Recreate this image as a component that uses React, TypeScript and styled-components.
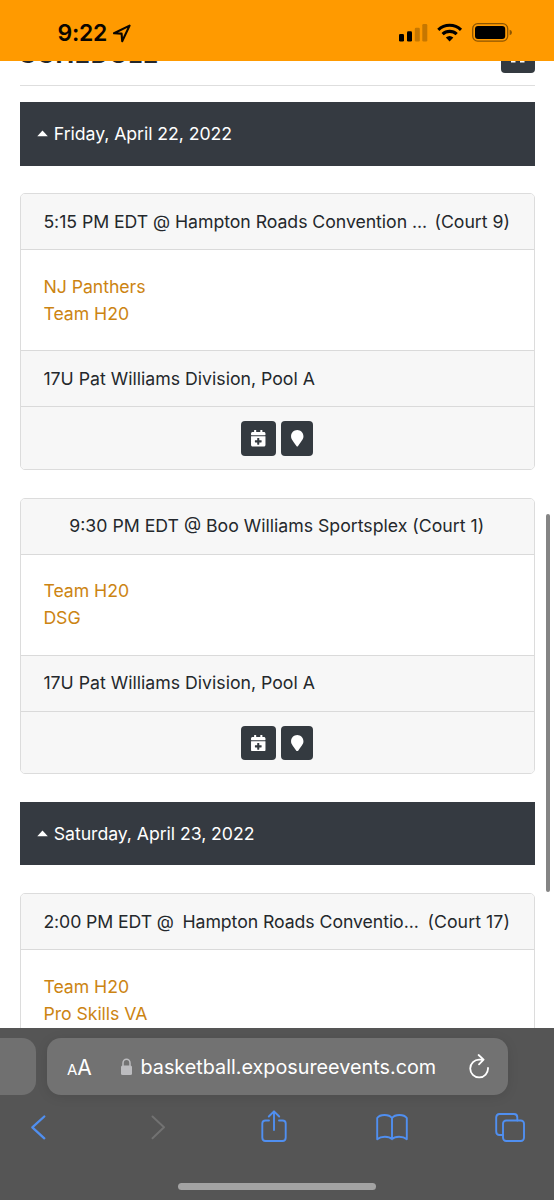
import React from 'react';
import styled, { createGlobalStyle } from 'styled-components';
import { FaCalendarPlus, FaMapMarker } from 'react-icons/fa';

const GlobalStyle = createGlobalStyle`
  *, *::before, *::after { box-sizing: border-box; }
  body { margin: 0; background: #fff; }
`;

const Screen = styled.div`
  position: relative;
  display: flex;
  flex-direction: column;
  width: 554px;
  height: 1200px;
  overflow: hidden;
  font-family: Inter, 'Liberation Sans', sans-serif;
  font-size: 17.7px;
  line-height: 27.3px;
  color: #24282c;
  background: #fff;
`;

const StatusBar = styled.header`
  display: flex;
  flex: none;
  justify-content: space-between;
  height: 61px;
  padding: 20px 41px 0 57.5px;
  background: #ff9a00;
  color: #0a0600;
`;

const Clock = styled.div`
  display: flex;
  gap: 5px;
  font-size: 23px;
  font-weight: 600;
  letter-spacing: -0.3px;
`;

const StatusIcons = styled.svg`
  flex: none;
  display: block;
`;

const Page = styled.main`
  flex: none;
  display: flex;
  flex-direction: column;
  height: 967px;
  padding: 0 19.5px;
  overflow: hidden;
`;

const TitleRow = styled.div`
  display: flex;
  flex: none;
  justify-content: space-between;
  align-items: flex-end;
  height: 42px;
  margin-top: -17px;
  padding-bottom: 12px;
  border-bottom: 1px solid #dedede;
`;

const Title = styled.h1`
  margin: 0 0 5.5px;
  font-size: 25px;
  line-height: 28px;
  font-weight: 700;
  letter-spacing: 0.6px;
`;

const IconButton = styled.button<{ $width: number }>`
  display: flex;
  align-items: center;
  justify-content: center;
  width: ${p => p.$width}px;
  height: 34.5px;
  padding: 0;
  border: 0;
  border-radius: 4px;
  background: #343a40;
  color: #fff;
  font-size: 16.5px;
`;

const DayBar = styled.div`
  display: flex;
  flex: none;
  align-items: center;
  gap: 5px;
  height: 63.5px;
  margin: 0 0 27.7px;
  padding: 0 17.8px;
  background: #353a41;
  color: #fff;
`;

const Spacer = styled.div`
  flex: none;
  height: 16px;
`;

const Card = styled.section`
  flex: none;
  height: 276.9px;
  margin-bottom: 27.5px;
  border: 1px solid #dcdcdc;
  border-radius: 5px;
  background: #fff;
  overflow: hidden;
`;

const CardHeader = styled.div<{ $centered?: boolean }>`
  display: flex;
  justify-content: ${p => (p.$centered ? 'center' : 'space-between')};
  height: 56px;
  padding: 13.7px 23.5px 0 22.9px;
  border-bottom: 1px solid #dadada;
  background: #f7f7f7;
  white-space: pre;
`;

const Teams = styled.div`
  display: flex;
  flex-direction: column;
  height: 100px;
  padding: 22.4px 22.9px 0;
`;

const TeamLink = styled.a`
  color: #cc8412;
  text-decoration: none;
  letter-spacing: -0.05px;
`;

const Division = styled.div`
  height: 56px;
  padding: 13.7px 22.9px 0;
  border-top: 1px solid #dadada;
  background: #f7f7f7;
`;

const Actions = styled.div`
  display: flex;
  justify-content: center;
  gap: 5px;
  height: 65px;
  padding-top: 14px;
  border-top: 1px solid #dadada;
  background: #f7f7f7;
`;

const ScrollThumb = styled.div`
  position: absolute;
  top: 514px;
  right: 4px;
  width: 4px;
  height: 378px;
  border-radius: 2px;
  background: #858585;
`;

const Text = styled.span<{ $tracking?: number }>`
  letter-spacing: ${p => p.$tracking ?? 0}px;
  white-space: pre;
`;

const BrowserBar = styled.footer`
  display: flex;
  flex: none;
  flex-direction: column;
  height: 172px;
  background: #555;
`;

const TabStrip = styled.div`
  display: flex;
  gap: 11px;
  padding-top: 10.2px;
`;

const PreviousTab = styled.div`
  width: 36px;
  height: 56.5px;
  border-radius: 0 14px 14px 0;
  background: #707070;
`;

const AddressField = styled.div`
  display: flex;
  align-items: center;
  width: 460.5px;
  height: 56.5px;
  padding: 2px 18px 0 20px;
  border-radius: 14px;
  background: #727272;
  box-shadow: 0 2px 12px rgba(0, 0, 0, 0.1);
  color: #fff;
`;

const TextSize = styled.span`
  display: flex;
  align-items: baseline;
  width: 53px;
  font-size: 21px;
`;

const SmallLetter = styled.span`
  font-size: 15px;
  line-height: 16px;
`;

const Url = styled.span`
  flex: 1;
  margin-left: 7.5px;
  font-size: 19.8px;
  white-space: nowrap;
`;

const Toolbar = styled.nav`
  display: grid;
  grid-template-columns: repeat(5, 118px);
  justify-items: center;
  height: 34px;
  margin: 14.3px 0 0 -21px;
`;

const HomeIndicator = styled.div`
  align-self: center;
  width: 198px;
  height: 7px;
  margin-top: 40px;
  border-radius: 4px;
  background: #a3a3a3;
`;

const ToolIcon = ({ w, color = '#508ff0', children }: { w: number; color?: string; children: React.ReactNode }) => (
  <svg width={w} height="34" viewBox={`0 0 ${w} 34`} fill="none" stroke={color} strokeWidth="1.9" strokeLinecap="round" strokeLinejoin="round">
    {children}
  </svg>
);

const Caret = () => (
  <svg width="11.5" height="7" viewBox="0 0 11.5 7"><path d="M.3 6.3 5.5.6 10.8 6.3Z" fill="#fff" /></svg>
);

interface Game {
  header: { text: string; tracking?: number }[];
  teams: string[];
  division?: string;
}

const days: { label: string; games: Game[] }[] = [
  {
    label: 'Friday, April 22, 2022',
    games: [
      {
        header: [{ text: '5:15 PM EDT @ Hampton Roads Convention ...', tracking: -0.05 }, { text: '(Court 9)' }],
        teams: ['NJ Panthers', 'Team H20'],
        division: '17U Pat Williams Division, Pool A',
      },
      {
        header: [{ text: '9:30 PM EDT @ Boo Williams Sportsplex (Court 1)' }],
        teams: ['Team H20', 'DSG'],
        division: '17U Pat Williams Division, Pool A',
      },
    ],
  },
  {
    label: 'Saturday, April 23, 2022',
    games: [
      {
        header: [{ text: '2:00 PM EDT @', tracking: -0.1 }, { text: 'Hampton Roads Conventio...', tracking: -0.07 }, { text: '(Court 17)', tracking: 0.08 }],
        teams: ['Team H20', 'Pro Skills VA'],
      },
    ],
  },
];

const GameCard = ({ game }: { game: Game }) => (
  <Card>
    <CardHeader $centered={game.header.length === 1}>
      {game.header.map(part => <Text key={part.text} $tracking={part.tracking}>{part.text}</Text>)}
    </CardHeader>
    <Teams>
      {game.teams.map(team => <TeamLink key={team}>{team}</TeamLink>)}
    </Teams>
    {game.division && (
      <>
        <Division><Text>{game.division}</Text></Division>
        <Actions>
          <IconButton $width={34.5} aria-label="Add to calendar"><FaCalendarPlus /></IconButton>
          <IconButton $width={32.5} aria-label="Map"><FaMapMarker /></IconButton>
        </Actions>
      </>
    )}
  </Card>
);

export default function App() {
  return (
    <Screen>
      <GlobalStyle />
      <StatusBar>
        <Clock>
          9:22
          <svg width="20" height="24" viewBox="0 0 20 24" fill="none" stroke="currentColor" strokeWidth="2.1" strokeLinejoin="round">
            <path d="M17.6 5.6 2 13.2 9.6 13.6 10.2 21.2Z" />
          </svg>
        </Clock>
        <StatusIcons width="115" height="24" viewBox="398 20 115 24">
          <rect x="399" y="34" width="5" height="7.5" rx="1.3" />
          <rect x="407" y="31.3" width="5" height="10.2" rx="1.3" />
          <g opacity=".22">
            <rect x="414.8" y="27.7" width="5" height="13.8" rx="1.3" />
            <rect x="422.3" y="24" width="5" height="17.5" rx="1.3" />
          </g>
          <g fill="none" stroke="#000" strokeWidth="3.1">
            <path d="M438.3 29.9A16.3 16.3 0 0 1 461 29.9" />
            <path d="M442.6 34.2A10.2 10.2 0 0 1 456.7 34.2" />
          </g>
          <path d="M449.6 41.4 445.8 37.6Q449.6 34.5 453.4 37.6Z" />
          <rect x="472.7" y="23.7" width="35" height="17.4" rx="5" fill="none" stroke="#000" strokeOpacity=".45" strokeWidth="1.3" />
          <rect x="475" y="26" width="30.2" height="12.9" rx="3" />
          <path d="M509.6 29.8Q512 30.5 512 32.5T509.6 35.2Z" opacity=".45" />
        </StatusIcons>
      </StatusBar>
      <Page>
        <TitleRow>
          <Title>SCHEDULE</Title>
          <IconButton $width={34} aria-label="Calendar">
            <svg width="16" height="18" viewBox="0 0 16 18" fill="#fff"><path d="M1 0H15V10H1ZM1 13H5.5V15.4H1ZM10 13H14.5V15.4H10Z" /></svg>
          </IconButton>
        </TitleRow>
        <Spacer />
        {days.map(day => (
          <React.Fragment key={day.label}>
            <DayBar><Caret /><Text $tracking={-0.06}>{day.label}</Text></DayBar>
            {day.games.map(game => <GameCard key={game.header[0].text} game={game} />)}
          </React.Fragment>
        ))}
      </Page>
      <ScrollThumb />
      <BrowserBar>
        <TabStrip>
          <PreviousTab />
          <AddressField>
            <TextSize><SmallLetter>A</SmallLetter>A</TextSize>
            <svg width="13" height="18" viewBox="0 0 13 18">
              <rect x="1" y="7.5" width="11" height="9.5" rx="1.5" fill="#bcbcbf" />
              <path d="M3 8V5a3.5 3.7 0 0 1 7 0V8" fill="none" stroke="#bcbcbf" strokeWidth="1.5" />
            </svg>
            <Url>basketball.exposureevents.com</Url>
            <svg width="22" height="26" viewBox="0 0 22 26" fill="none" stroke="#fff" strokeWidth="1.8" strokeLinecap="round" strokeLinejoin="round">
              <path d="M15.5 5.6H11.5A8.9 8.9 0 1 0 20 14M10.6 1 15.6 5.6 11 10.3" />
            </svg>
          </AddressField>
        </TabStrip>
        <Toolbar>
          <ToolIcon w={17}><path d="M14.3 7.5 2.3 18.3 14.3 29.3" strokeWidth="2.3" /></ToolIcon>
          <ToolIcon w={17} color="#727272"><path d="M4.5 7.5 16 18.3 4.5 29.3" /></ToolIcon>
          <ToolIcon w={26}><path d="M8 11.5H4.5Q1.3 11.5 1.3 14.5V28.5Q1.3 32 4.5 32H21.5Q24.7 32 24.7 28.5V14.5Q24.7 11.5 21.5 11.5H18M13 21V3M7.8 7.5 13 2.3 18.2 7.5" /></ToolIcon>
          <ToolIcon w={32}><path d="M16 9C13 5 4 5 1.2 9V30.2C5 27 13 27 16 30.2 19 27 27 27 30.8 30.2V9C28 5 19 5 16 9V30" /></ToolIcon>
          <ToolIcon w={30}><rect x="8" y="11.5" width="21" height="20.5" rx="3.2" /><path d="M8 26H4.5Q1.2 26 1.2 22.5V8.5Q1.2 5 4.5 5H19Q22.3 5 22.3 8.5V11.5" /></ToolIcon>
        </Toolbar>
        <HomeIndicator />
      </BrowserBar>
    </Screen>
  );
}
